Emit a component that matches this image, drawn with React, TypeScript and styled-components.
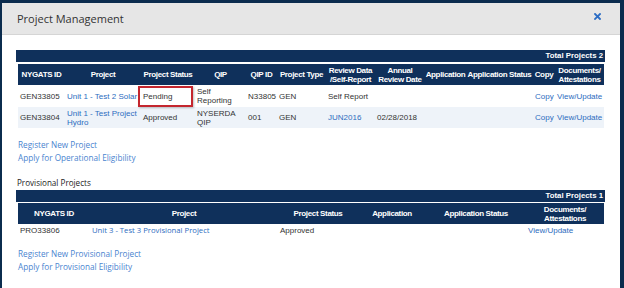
import styled, { createGlobalStyle } from 'styled-components'

const GlobalStyle = createGlobalStyle`
  html, body {
    margin: 0;
    padding: 0;
  }

  body {
    width: 624px;
    height: 288px;
    overflow: hidden;
    background: #0b2c4e;
    font-family: 'Liberation Sans', Arial, sans-serif;
  }
`

const NAVY = '#0f305b'

interface Project {
  id: string
  name: string
  status: string
  qip: string
  qipId: string
  type: string
  review: string
  reviewIsLink: boolean
  annualReview: string
  marked?: boolean
  height: number
}

const projects: Project[] = [
  {
    id: 'GEN33805',
    name: 'Unit 1 - Test 2 Solar',
    status: 'Pending',
    qip: 'Self Reporting',
    qipId: 'N33805',
    type: 'GEN',
    review: 'Self Report',
    reviewIsLink: false,
    annualReview: '',
    marked: true,
    height: 22,
  },
  {
    id: 'GEN33804',
    name: 'Unit 1 - Test Project Hydro',
    status: 'Approved',
    qip: 'NYSERDA QIP',
    qipId: '001',
    type: 'GEN',
    review: 'JUN2016',
    reviewIsLink: true,
    annualReview: '02/28/2018',
    height: 21,
  },
]

const provisionalProjects = [
  { id: 'PRO33806', name: 'Unit 3 - Test 3 Provisional Project', status: 'Approved' },
]

const projectColumns = [47, 76, 54, 51, 31, 49, 49, 50, 41, 67, 22, 49]
const provisionalColumns = [72, 188, 80, 68, 100, 78]

const Frame = styled.div`
  height: 288px;
  box-sizing: border-box;
  padding: 3px 4px 0 2px;
`

const Modal = styled.div`
  height: 100%;
  display: flex;
  flex-direction: column;
  background: #fff;
`

const ModalHeader = styled.div`
  height: 32px;
  box-sizing: border-box;
  padding: 0 19px 0 15px;

  display: flex;
  align-items: center;
  justify-content: space-between;

  background: #e6e6e6;
  border-bottom: 1px solid #d5d5d5;
`

const ModalTitle = styled.h1`
  margin: 0;
  font: 400 11px/1 'Open Sans', sans-serif;
  color: #333;
`

const CloseButton = styled.button`
  width: 7px;
  height: 7px;
  margin-bottom: 5px;
  padding: 0;
  border: 0;
  background: none;
  display: flex;
  color: #2b6cc4;
  cursor: pointer;
`

const ModalBody = styled.div`
  padding: 15px 15px 0 14px;
  display: flex;
  flex-direction: column;
`

const Panel = styled.div<{ $gap: number }>`
  display: flex;
  flex-direction: column;
  gap: ${props => props.$gap}px;
`

const TotalBar = styled.div`
  height: 12px;
  padding-right: 2px;
  background: ${NAVY};
  color: #fff;
  font: 700 7.8px/12px 'Liberation Sans', Arial, sans-serif;
  text-align: right;
`

const Grid = styled.table`
  width: 586px;
  margin-left: 2px;
  border-collapse: collapse;
  table-layout: fixed;
`

const HeadCell = styled.th`
  height: 21px;
  padding: 0;
  background: ${NAVY};
  color: #fff;
  font: 700 8px/9px 'Liberation Sans', Arial, sans-serif;
  letter-spacing: -0.35px;
  text-align: center;
  vertical-align: middle;
  white-space: nowrap;
`

const Row = styled.tr<{ $height: number }>`
  height: ${props => props.$height}px;

  &:nth-child(even) {
    background: #eef3f9;
  }
`

const Cell = styled.td<{ $marked?: boolean }>`
  padding: 0 0 0 2px;
  font: 400 8px/9px 'Liberation Sans', Arial, sans-serif;
  color: #333;
  vertical-align: middle;
  position: ${props => (props.$marked ? 'relative' : 'static')};

  &::after {
    content: ${props => (props.$marked ? "''" : 'none')};
    position: absolute;
    left: -3px;
    right: 2px;
    top: 1px;
    bottom: 0;
    border: 2px solid #c4262e;
    box-shadow: 1px 1px 2px rgba(0, 0, 0, 0.25);
  }
`

const TableLink = styled.a<{ $humanist?: boolean }>`
  color: #2d6cc0;
  text-decoration: none;
  font-family: ${props =>
    props.$humanist ? "'Open Sans', sans-serif" : "'Liberation Sans', Arial, sans-serif"};
  font-size: ${props => (props.$humanist ? '7.7px' : '8px')};
`

const ActionLinks = styled.div`
  margin: 10px 0 0 2px;
  display: flex;
  flex-direction: column;
  align-items: flex-start;
`

const ActionLink = styled.a`
  font: 400 8.2px/13px 'Open Sans', sans-serif;
  color: #4a84cf;
  text-decoration: none;
`

const SectionTitle = styled.h2`
  margin: 13px 0 1px 1px;
  font: 400 8.1px/12px 'Open Sans', sans-serif;
  color: #222;
`

function CloseIcon() {
  return (
    <svg width="7" height="7" viewBox="0 0 7 7">
      <path d="M1 1 L6 6 M6 1 L1 6" stroke="currentColor" strokeWidth="1.8" strokeLinecap="square" />
    </svg>
  )
}

function Columns({ widths }: { widths: number[] }) {
  return (
    <colgroup>
      {widths.map((w, i) => (
        <col key={i} style={{ width: w }} />
      ))}
    </colgroup>
  )
}

function ProjectsTable() {
  return (
    <Panel $gap={2}>
      <TotalBar>Total Projects 2</TotalBar>
      <Grid>
        <Columns widths={projectColumns} />
        <thead>
          <tr>
            <HeadCell>NYGATS ID</HeadCell>
            <HeadCell>Project</HeadCell>
            <HeadCell>Project Status</HeadCell>
            <HeadCell>QIP</HeadCell>
            <HeadCell>QIP ID</HeadCell>
            <HeadCell>Project Type</HeadCell>
            <HeadCell>
              Review Data
              <br />
              /Self-Report
            </HeadCell>
            <HeadCell>
              Annual
              <br />
              Review Date
            </HeadCell>
            <HeadCell>Application</HeadCell>
            <HeadCell>Application Status</HeadCell>
            <HeadCell>Copy</HeadCell>
            <HeadCell>
              Documents/
              <br />
              Attestations
            </HeadCell>
          </tr>
        </thead>
        <tbody>
          {projects.map(p => (
            <Row key={p.id} $height={p.height}>
              <Cell>{p.id}</Cell>
              <Cell>
                <TableLink href="#">{p.name}</TableLink>
              </Cell>
              <Cell $marked={p.marked}>{p.status}</Cell>
              <Cell>{p.qip}</Cell>
              <Cell>{p.qipId}</Cell>
              <Cell>{p.type}</Cell>
              <Cell>{p.reviewIsLink ? <TableLink href="#">{p.review}</TableLink> : p.review}</Cell>
              <Cell>{p.annualReview}</Cell>
              <Cell />
              <Cell />
              <Cell>
                <TableLink href="#">Copy</TableLink>
              </Cell>
              <Cell>
                <TableLink href="#">View/Update</TableLink>
              </Cell>
            </Row>
          ))}
        </tbody>
      </Grid>
    </Panel>
  )
}

function ProvisionalTable() {
  return (
    <Panel $gap={1}>
      <TotalBar>Total Projects 1</TotalBar>
      <Grid>
        <Columns widths={provisionalColumns} />
        <thead>
          <tr>
            <HeadCell>NYGATS ID</HeadCell>
            <HeadCell>Project</HeadCell>
            <HeadCell>Project Status</HeadCell>
            <HeadCell>Application</HeadCell>
            <HeadCell>Application Status</HeadCell>
            <HeadCell>
              Documents/
              <br />
              Attestations
            </HeadCell>
          </tr>
        </thead>
        <tbody>
          {provisionalProjects.map(p => (
            <Row key={p.id} $height={13}>
              <Cell>{p.id}</Cell>
              <Cell>
                <TableLink href="#" $humanist>
                  {p.name}
                </TableLink>
              </Cell>
              <Cell>{p.status}</Cell>
              <Cell />
              <Cell />
              <Cell>
                <TableLink href="#">View/Update</TableLink>
              </Cell>
            </Row>
          ))}
        </tbody>
      </Grid>
    </Panel>
  )
}

export default function App() {
  return (
    <>
      <GlobalStyle />
      <Frame>
        <Modal>
          <ModalHeader>
            <ModalTitle>Project Management</ModalTitle>
            <CloseButton aria-label="Close">
              <CloseIcon />
            </CloseButton>
          </ModalHeader>
          <ModalBody>
            <ProjectsTable />
            <ActionLinks>
              <ActionLink href="#">Register New Project</ActionLink>
              <ActionLink href="#">Apply for Operational Eligibility</ActionLink>
            </ActionLinks>

            <SectionTitle>Provisional Projects</SectionTitle>
            <ProvisionalTable />
            <ActionLinks>
              <ActionLink href="#">Register New Provisional Project</ActionLink>
              <ActionLink href="#">Apply for Provisional Eligibility</ActionLink>
            </ActionLinks>
          </ModalBody>
        </Modal>
      </Frame>
    </>
  )
}
